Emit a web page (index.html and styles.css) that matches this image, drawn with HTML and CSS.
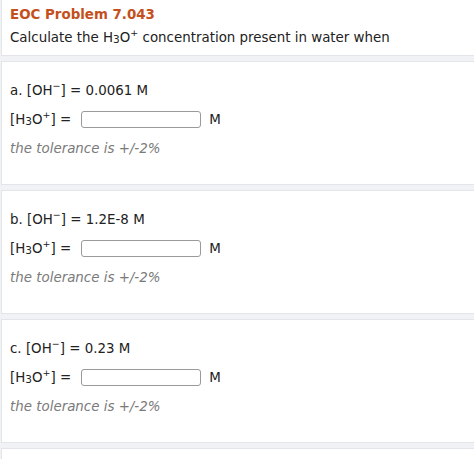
FILE: index.html
```html
<!DOCTYPE html>
<html>
<head>
<meta charset="utf-8">
<link rel="stylesheet" href="styles.css">
</head>
<body>
<div class="card head">
  <div class="title">EOC Problem 7.043</div>
  <div class="intro">Calculate the H<sub>3</sub>O<sup>+</sup> concentration present in water when</div>
</div>
<div class="card part">
  <div class="given">a. [OH<sup>−</sup>] = 0.0061 M</div>
  <div class="answer"><span>[H<sub>3</sub>O<sup>+</sup>] =</span><span class="box"></span><span>M</span></div>
  <div class="tol">the tolerance is +/-2%</div>
</div>
<div class="card part">
  <div class="given">b. [OH<sup>−</sup>] = 1.2E-8 M</div>
  <div class="answer"><span>[H<sub>3</sub>O<sup>+</sup>] =</span><span class="box"></span><span>M</span></div>
  <div class="tol">the tolerance is +/-2%</div>
</div>
<div class="card part">
  <div class="given">c. [OH<sup>−</sup>] = 0.23 M</div>
  <div class="answer"><span>[H<sub>3</sub>O<sup>+</sup>] =</span><span class="box"></span><span>M</span></div>
  <div class="tol">the tolerance is +/-2%</div>
</div>
<div class="card part"></div>
</body>
</html>
```
FILE: styles.css
```css
html, body {
  margin: 0;
  padding: 0;
  background: #f1f2f5;
  overflow: hidden;
}
body {
  font-family: "DejaVu Sans", Verdana, sans-serif;
  font-size: 13.4px;
  color: #222;
  width: 474px;
  height: 459px;
}
.card {
  background: #fff;
  border: 1px solid #e2e5ea;
  margin: 0 -12px 5px 1px;
  box-sizing: border-box;
}
.head {
  height: 56px;
  border-top: none;
  padding: 6px 8px 0;
}
.title {
  color: #c4501c;
  font-weight: bold;
  font-size: 13.4px;
  line-height: 18px;
}
.intro {
  margin-top: 5px;
  line-height: 18px;
}
sub {
  font-size: 10.5px;
  vertical-align: -1px;
  line-height: 0;
}
sup {
  font-size: 9.5px;
  vertical-align: 6px;
  line-height: 0;
}
.part {
  height: 124px;
  padding: 20px 8px 0;
}
.given {
  line-height: 18px;
}
.answer {
  display: flex;
  align-items: center;
  gap: 8px;
  margin-top: 10px;
  height: 18px;
}
.box {
  width: 120px;
  height: 17px;
  border: 1px solid #9a9a9a;
  border-radius: 3px;
  background: #fff;
  box-sizing: border-box;
  margin-left: 2px;
}
.tol {
  margin-top: 12px;
  font-style: italic;
  color: #7a7a7a;
  line-height: 18px;
}
```
